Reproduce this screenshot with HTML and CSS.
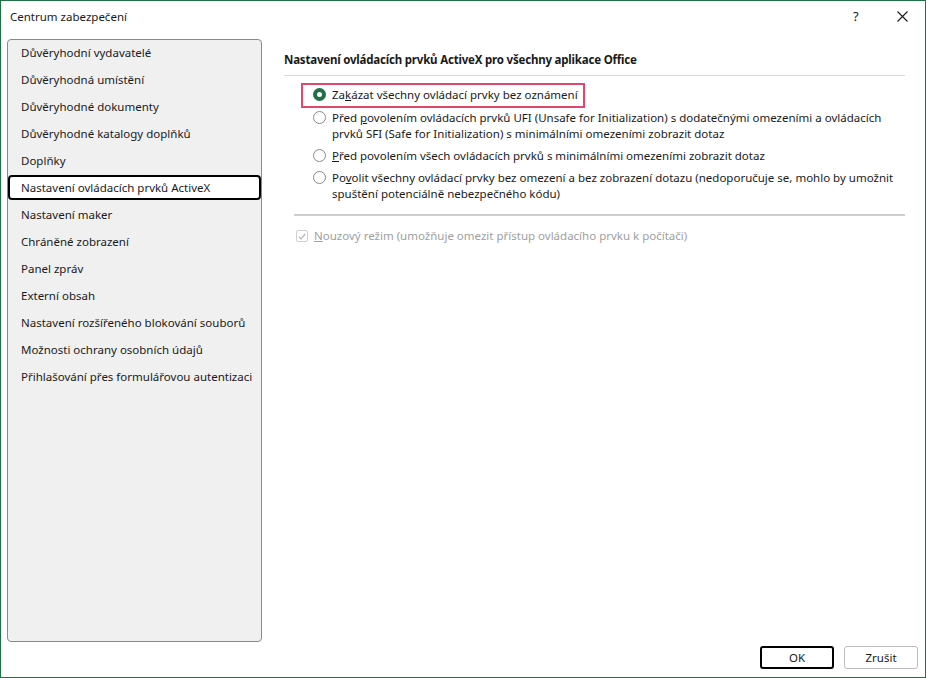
FILE: index.html
```html
<!DOCTYPE html>
<html lang="cs">
<head>
    <meta charset="UTF-8">
    <title>Centrum zabezpečení</title>
    <link rel="stylesheet" href="styles.css">
</head>
<body>
    <div class="dialog">
        <div class="titlebar">
            <span class="title">Centrum zabezpečení</span>
            <span class="help">?</span>
            <span class="close">
                <svg width="11" height="11" viewBox="0 0 11 11">
                    <path d="M0.5 0.5 L10.5 10.5 M10.5 0.5 L0.5 10.5" stroke="#1a1a1a" stroke-width="1.1" fill="none"/>
                </svg>
            </span>
        </div>

        <div class="main">
            <ul class="nav">
                <li>Důvěryhodní vydavatelé</li>
                <li>Důvěryhodná umístění</li>
                <li>Důvěryhodné dokumenty</li>
                <li>Důvěryhodné katalogy doplňků</li>
                <li>Doplňky</li>
                <li class="selected">Nastavení ovládacích prvků ActiveX</li>
                <li>Nastavení maker</li>
                <li>Chráněné zobrazení</li>
                <li>Panel zpráv</li>
                <li>Externí obsah</li>
                <li>Nastavení rozšířeného blokování souborů</li>
                <li>Možnosti ochrany osobních údajů</li>
                <li>Přihlašování přes formulářovou autentizaci</li>
            </ul>

            <div class="content">
                <h2 class="heading">Nastavení ovládacích prvků ActiveX pro všechny aplikace Office</h2>

                <div class="options">
                    <div class="option marked">
                        <span class="radio checked"></span>
                        <span class="label">Za<u>k</u>ázat všechny ovládací prvky bez oznámení</span>
                    </div>
                    <div class="option">
                        <span class="radio"></span>
                        <span class="label">Před <u>p</u>ovolením ovládacích prvků UFI (Unsafe for Initialization) s dodatečnými omezeními a ovládacích prvků SFI (Safe for Initialization) s minimálními omezeními zobrazit dotaz</span>
                    </div>
                    <div class="option">
                        <span class="radio"></span>
                        <span class="label"><u>P</u>řed povolením všech ovládacích prvků s minimálními omezeními zobrazit dotaz</span>
                    </div>
                    <div class="option">
                        <span class="radio"></span>
                        <span class="label">Po<u>v</u>olit všechny ovládací prvky bez omezení a bez zobrazení dotazu (nedoporučuje se, mohlo by umožnit spuštění potenciálně nebezpečného kódu)</span>
                    </div>
                </div>

                <div class="separator"></div>

                <div class="check disabled">
                    <span class="box">
                        <svg width="8" height="7" viewBox="0 0 8 7">
                            <path d="M0.8 3.6 L3 5.8 L7.2 1" stroke="#b4b4b4" stroke-width="1.2" fill="none"/>
                        </svg>
                    </span>
                    <span class="label"><u>N</u>ouzový režim (umožňuje omezit přístup ovládacího prvku k počítači)</span>
                </div>
            </div>
        </div>

        <div class="footer">
            <button class="btn default">OK</button>
            <button class="btn">Zrušit</button>
        </div>
    </div>
</body>
</html>
```

FILE: styles.css
```css
* {
    box-sizing: border-box;
}
html, body {
    margin: 0;
    height: 100%;
}
body {
    font-family: "Noto Sans", "Liberation Sans", sans-serif;
    font-size: 11.5px;
    color: #1a1a1a;
    background: #fff;
}
.dialog {
    height: 678px;
    border: 1px solid #1e7145;
    display: flex;
    flex-direction: column;
}

/* title bar */
.titlebar {
    height: 38px;
    display: flex;
    align-items: center;
    padding: 0 0 8px 9px;
}
.title {
    flex: 1;
}
.help {
    width: 14px;
    margin-right: 30px;
    font-size: 13px;
}
.close {
    width: 11px;
    margin-right: 17px;
    display: flex;
}

/* left navigation */
.main {
    flex: 1;
    display: flex;
    min-height: 0;
}
.nav {
    list-style: none;
    margin: 0 0 0 6px;
    padding: 0;
    width: 255px;
    background: #f0f0f0;
    border: 1px solid #8a8a8a;
    border-radius: 4px;
}
.nav li {
    height: 25px;
    margin-bottom: 2px;
    line-height: 21px;
    padding-left: 11px;
    border: 2px solid transparent;
    border-radius: 4px;
    white-space: nowrap;
}
.nav li.selected {
    border-color: #000;
    background: #fff;
}

/* right side */
.content {
    flex: 1;
    padding: 13px 20px 0 22px;
}
.heading {
    margin: 0;
    font-size: 11.5px;
    font-weight: bold;
    letter-spacing: -0.2px;
    line-height: 16px;
    padding-bottom: 7px;
    border-bottom: 1px solid #dadada;
}
.options {
    margin-top: 7px;
    padding-left: 29px;
}
.option {
    display: flex;
    align-items: flex-start;
    line-height: 16px;
    margin-bottom: 6px;
}
.option.marked {
    width: fit-content;
    margin-left: -12px;
    margin-bottom: 2px;
    padding: 2px 5px 3px 10px;
    border: 2px solid #e2466c;
}
.radio {
    flex: none;
    width: 13px;
    height: 13px;
    margin: 1px 6px 0 0;
    border: 1px solid #8a8a8a;
    border-radius: 50%;
    background: #fff;
}
.radio.checked {
    border: 4px solid #1e7145;
}
.label {
    flex: 1;
}
.separator {
    height: 2px;
    margin: 12px 0 0 10px;
    background: #cdcdcd;
}
.check {
    display: flex;
    align-items: center;
    line-height: 16px;
    margin: 12px 0 0 12px;
}
.check.disabled {
    color: #a0a0a0;
}
.box {
    width: 12px;
    height: 12px;
    margin-right: 6px;
    border: 1px solid #cfcfcf;
    border-radius: 2px;
    display: flex;
    align-items: center;
    justify-content: center;
}

/* buttons */
.footer {
    display: flex;
    justify-content: flex-end;
    gap: 10px;
    padding: 4px 7px 8px 0;
}
.btn {
    width: 74px;
    height: 23px;
    font: inherit;
    color: #1a1a1a;
    background: #fff;
    border: 1px solid #bcbcbc;
    border-radius: 3px;
}
.btn.default {
    border: 2px solid #000;
}
```
